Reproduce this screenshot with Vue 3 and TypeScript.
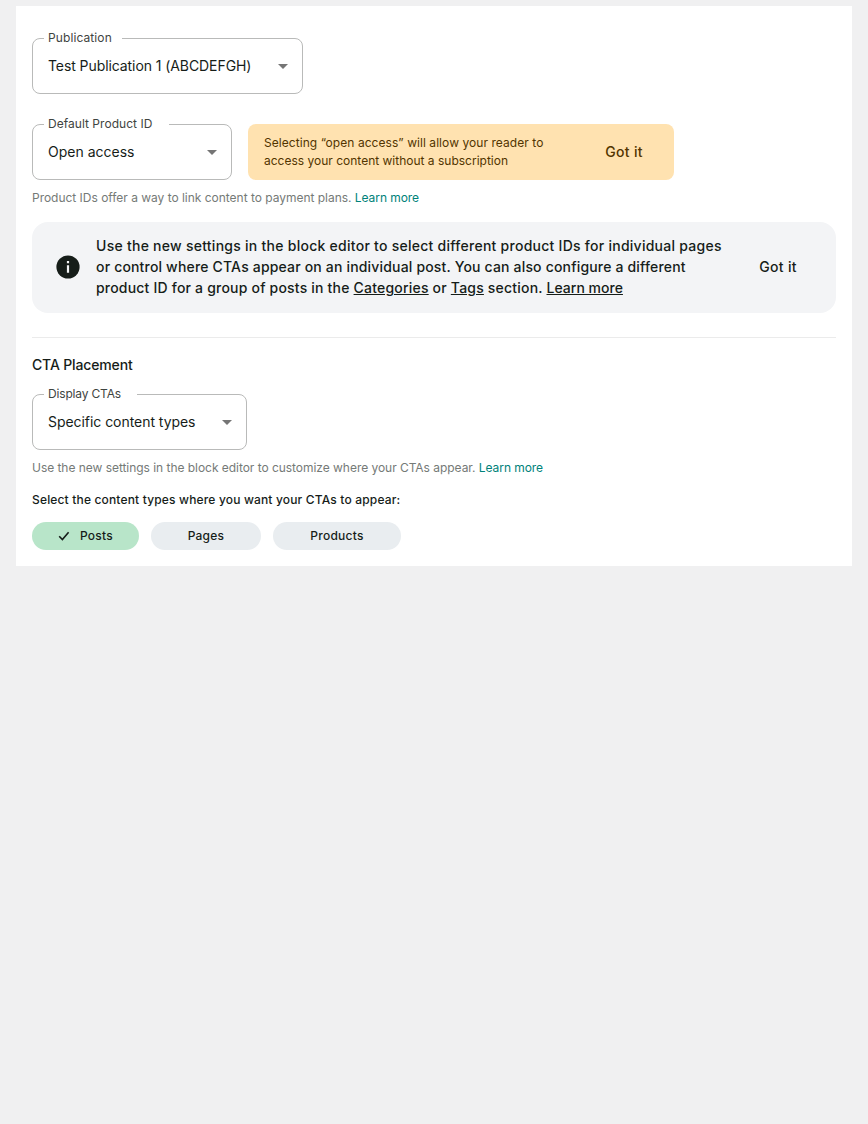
<script setup lang="ts">
import { ref } from 'vue'

interface Chip {
  label: string
  kind: string
}

const chips: Chip[] = [
  { label: 'Posts', kind: 'posts' },
  { label: 'Pages', kind: 'pages' },
  { label: 'Products', kind: 'products' },
]
const selected = ref<string[]>(['posts'])

function toggle(kind: string): void {
  selected.value = selected.value.includes(kind)
    ? selected.value.filter((k) => k !== kind)
    : [...selected.value, kind]
}
</script>

<template>
  <main class="panel">
    <div class="select publication">
      <span class="label"><span class="label-text">Publication</span></span>
      <span class="value">Test Publication 1 (ABCDEFGH)</span>
      <svg class="arrow" width="10" height="5" viewBox="0 0 10 5"><path d="M0 0h10L5 5z" fill="#757575" /></svg>
    </div>

    <div class="product-row">
      <div class="select product">
        <span class="label"><span class="label-text">Default Product ID</span></span>
        <span class="value">Open access</span>
        <svg class="arrow" width="10" height="5" viewBox="0 0 10 5"><path d="M0 0h10L5 5z" fill="#757575" /></svg>
      </div>
      <div class="warning">
        <p class="warning-text">
          <span class="w1">Selecting “open access” will allow your reader to</span><br />
          <span class="w2">access your content without a subscription</span>
        </p>
        <button class="got-it" type="button">Got it</button>
      </div>
    </div>
    <p class="helper h1"><span>Product IDs offer a way to link content to payment plans. </span><a>Learn more</a></p>

    <section class="info">
      <svg class="info-icon" width="24" height="24" viewBox="0 0 24 24">
        <circle cx="12" cy="12" r="11.6" fill="#161d19" />
        <path d="M10.9 6h2.2v2.2h-2.2zM10.9 10.2h2.2v7.6h-2.2z" fill="#f3f4f6" />
      </svg>
      <p class="info-text">
        <span class="i1">Use the new settings in the block editor to select different product IDs for individual pages</span><br />
        <span class="i2">or control where CTAs appear on an individual post. You can also configure a different</span><br />
        <span class="i3">product ID for a group of posts in the <a>Categories</a> or <a>Tags</a> section. <a class="more">Learn more</a></span>
      </p>
      <button class="got-it" type="button">Got it</button>
    </section>

    <hr class="divider" />

    <h2 class="title">CTA Placement</h2>
    <div class="select display">
      <span class="label"><span class="label-text">Display CTAs</span></span>
      <span class="value">Specific content types</span>
      <svg class="arrow" width="10" height="5" viewBox="0 0 10 5"><path d="M0 0h10L5 5z" fill="#757575" /></svg>
    </div>
    <p class="helper h2"><span>Use the new settings in the block editor to customize where your CTAs appear. </span><a>Learn more</a></p>

    <p class="prompt">Select the content types where you want your CTAs to appear:</p>
    <div class="chips">
      <button
        v-for="chip in chips"
        :key="chip.kind"
        type="button"
        :class="['chip', chip.kind, { active: selected.includes(chip.kind) }]"
        @click="toggle(chip.kind)"
      >
        <svg v-if="selected.includes(chip.kind)" width="12" height="10" viewBox="0 0 12 10">
          <path d="M1.2 5.2 4.4 8.6 10.6 1.2" fill="none" stroke="#161d19" stroke-width="1.6" />
        </svg>
        <span>{{ chip.label }}</span>
      </button>
    </div>
  </main>
</template>

<style>
body {
  background: #f0f0f1;
}
</style>

<style scoped>
.panel {
  box-sizing: border-box;
  width: 836px;
  height: 560px;
  margin: 6px 16px 0;
  padding: 32px 16px 16px;
  background: #fff;
  box-shadow: 0 1px 0 #ebebec;
  color: #161d19;
  font-family: Inter, Roboto, "Liberation Sans", sans-serif;
  font-size: 14px;
  white-space: nowrap;
}
p,
h2 {
  margin: 0;
}
button {
  margin: 0;
  padding: 0;
  border: 0;
  background: none;
  color: inherit;
  font: inherit;
  white-space: nowrap;
}
.select {
  position: relative;
  box-sizing: border-box;
  display: flex;
  align-items: center;
  justify-content: space-between;
  height: 56px;
  padding: 0 14px 0 15px;
  border: 1px solid #b9bab9;
  border-radius: 8px;
}
.publication { width: 271px; }
.product { width: 200px; }
.display { width: 215px; }
.label {
  position: absolute;
  top: -9px;
  left: 11px;
  box-sizing: border-box;
  height: 16px;
  padding-left: 4px;
  background: #fff;
  color: #3f4441;
  font-size: 12px;
  line-height: 16px;
}
.publication .label { width: 78px; letter-spacing: 0.1px; }
.product .label { width: 125px; letter-spacing: 0.03px; }
.display .label { width: 93px; letter-spacing: -0.17px; }
.value {
  line-height: 20px;
}
.publication .value { letter-spacing: -0.08px; }
.display .value { letter-spacing: -0.05px; }
.product-row {
  display: flex;
  gap: 16px;
  margin-top: 30px;
}
.warning {
  box-sizing: border-box;
  display: flex;
  align-items: center;
  justify-content: space-between;
  width: 426px;
  height: 56px;
  padding: 0 31px 0 16px;
  border-radius: 8px;
  background: #ffe2b0;
  color: #523500;
}
.warning-text {
  font-size: 12px;
  line-height: 18px;
}
.w1 { letter-spacing: 0.06px; }
.got-it {
  font-weight: 500;
  letter-spacing: 0.36px;
  line-height: 20px;
}
.helper {
  color: #757a77;
  font-size: 12px;
  line-height: 16px;
}
.helper span {
  letter-spacing: -0.02px;
  white-space: pre;
}
.helper a {
  color: #00827a;
  letter-spacing: -0.07px;
}
.h1 { margin-top: 10px; }
.h2 { margin-top: 10px; }
.h2 span { letter-spacing: -0.038px; }
.info {
  box-sizing: border-box;
  display: flex;
  align-items: center;
  height: 91px;
  margin-top: 16px;
  padding: 0 39px 1px 24px;
  border-radius: 16px;
  background: #f3f4f6;
}
.info-text {
  flex: 1;
  margin-left: 16px;
  padding-bottom: 1px;
  font-weight: 500;
  line-height: 21px;
}
.info-text a {
  text-decoration: underline;
}
.i1 { letter-spacing: 0.262px; }
.i2 { letter-spacing: 0.176px; }
.i3 { letter-spacing: 0.2px; }
.i3 .more { letter-spacing: 0.02px; }
.divider {
  height: 1px;
  margin: 24px 0 0;
  border: 0;
  background: #ebebeb;
}
.title {
  margin-top: 17px;
  font-size: 14px;
  font-weight: 500;
  letter-spacing: -0.15px;
  line-height: 20px;
}
.display { margin-top: 19px; }
.prompt {
  margin-top: 16px;
  font-size: 12px;
  font-weight: 500;
  letter-spacing: 0.165px;
  line-height: 16px;
}
.chips {
  display: flex;
  gap: 12px;
  margin-top: 14px;
}
.chip {
  display: flex;
  align-items: center;
  justify-content: center;
  height: 28px;
  padding-bottom: 1px;
  box-sizing: border-box;
  border-radius: 14px;
  background: #e9edf0;
  font-size: 12px;
  font-weight: 500;
  letter-spacing: 0.25px;
}
.chip.active { background: #b8e5c9; }
.chip svg { margin: 1px 10px 0 0; }
.posts { width: 107px; }
.pages { width: 110px; }
.products { width: 128px; }
</style>
